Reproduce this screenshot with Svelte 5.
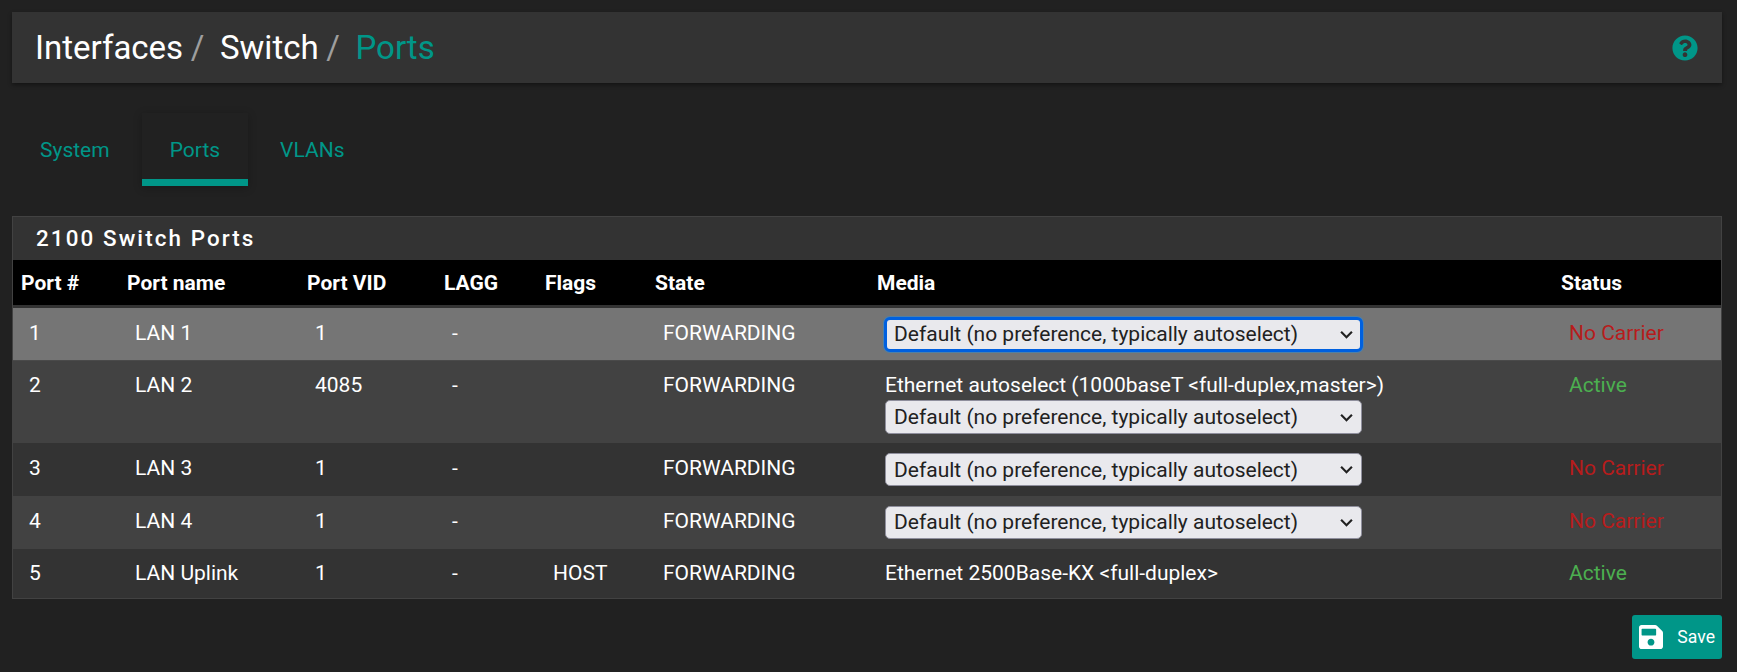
<script>
  const ports = [
    { id: 1, name: "LAN 1", vid: "1", flags: "", info: "", select: true, status: "No Carrier", focus: true },
    { id: 2, name: "LAN 2", vid: "4085", flags: "", info: "Ethernet autoselect (1000baseT <full-duplex,master>)", select: true, status: "Active" },
    { id: 3, name: "LAN 3", vid: "1", flags: "", info: "", select: true, status: "No Carrier" },
    { id: 4, name: "LAN 4", vid: "1", flags: "", info: "", select: true, status: "No Carrier" },
    { id: 5, name: "LAN Uplink", vid: "1", flags: "HOST", info: "Ethernet 2500Base-KX <full-duplex>", select: false, status: "Active" },
  ];
</script>

<div class="page">
  <header class="bar">
    <h1>
      <span>Interfaces</span><i>/</i>
      <span>Switch</span><i>/</i>
      <span class="current">Ports</span>
    </h1>
    <svg class="help" viewBox="0 0 512 512" width="26" height="26" aria-hidden="true">
      <path fill="currentColor" d="M504 256c0 137-111 248-248 248S8 393 8 256 119 8 256 8s248 111 248 248zM263 90c-54 0-89 23-116 64-4 5-3 12 3 16l35 26c5 4 13 3 17-2 18-23 30-36 58-36 21 0 46 13 46 33 0 15-12 23-33 34-23 14-55 31-55 73v7c0 7 5 12 12 12h56c7 0 12-5 12-12v-3c0-29 84-30 84-108 0-59-61-104-119-104zm-7 251c-25 0-46 21-46 46s21 46 46 46 46-21 46-46-21-46-46-46z" />
    </svg>
  </header>

  <nav class="tabs">
    <a href="#system">System</a>
    <a href="#ports" class="active">Ports</a>
    <a href="#vlans">VLANs</a>
  </nav>

  <section class="panel">
    <h2>2100 Switch Ports</h2>
    <table>
      <colgroup>
        <col style="width:106px" />
        <col style="width:180px" />
        <col style="width:137px" />
        <col style="width:101px" />
        <col style="width:110px" />
        <col style="width:222px" />
        <col style="width:684px" />
        <col />
      </colgroup>
      <thead>
        <tr>
          <th>Port #</th>
          <th>Port name</th>
          <th>Port VID</th>
          <th>LAGG</th>
          <th>Flags</th>
          <th>State</th>
          <th>Media</th>
          <th>Status</th>
        </tr>
      </thead>
      <tbody>
        {#each ports as p}
          <tr class:hover={p.focus}>
            <td>{p.id}</td>
            <td>{p.name}</td>
            <td>{p.vid}</td>
            <td>-</td>
            <td>{p.flags}</td>
            <td>FORWARDING</td>
            <td>
              {#if p.info}<div class="info">{p.info}</div>{/if}
              {#if p.select}
                <select class:focus={p.focus}>
                  <option>Default (no preference, typically autoselect)</option>
                </select>
              {/if}
            </td>
            <td class={p.status === "Active" ? "up" : "down"}>{p.status}</td>
          </tr>
        {/each}
      </tbody>
    </table>
  </section>

  <div class="actions">
    <button>
      <svg viewBox="0 0 448 448" width="24" height="24" aria-hidden="true">
        <path fill="currentColor" d="M433 113 335 15C325 5 313 0 301 0H48C21 0 0 21 0 48v352c0 27 21 48 48 48h352c27 0 48-21 48-48V147c0-12-5-24-15-34zM224 384c-35 0-64-29-64-64s29-64 64-64 64 29 64 64-29 64-64 64zm96-300v100c0 7-5 12-12 12H60c-7 0-12-5-12-12V80c0-7 5-12 12-12h244c9 0 16 7 16 16z" />
      </svg>
      Save
    </button>
  </div>
</div>

<style>
  :global(body) {
    background: #212121;
    font-family: Roboto, "Liberation Sans", sans-serif;
  }
  .page {
    padding: 12px 15px 0 12px;
    color: #fff;
    font-size: 21px;
  }
  .bar {
    height: 71px;
    background: #333;
    box-shadow: 0 2px 4px rgba(0, 0, 0, 0.4);
    display: flex;
    align-items: center;
    justify-content: space-between;
    padding: 0 24px 0 23px;
  }
  h1 {
    margin: 0;
    font-size: 33px;
    font-weight: 400;
  }
  h1 i {
    font-style: normal;
    color: #9e9e9e;
    margin: 0 7.5px;
  }
  .current {
    color: #009688;
  }
  .help {
    color: #009688;
    display: block;
  }
  .tabs {
    display: flex;
    margin: 30px 0;
  }
  .tabs a {
    color: #009688;
    text-decoration: none;
    box-sizing: border-box;
    height: 73px;
    padding: 8px 28px 0;
    margin-right: 4px;
    line-height: 58px;
    border-bottom: 7px solid transparent;
  }
  .tabs a.active {
    border-bottom-color: #009688;
    box-shadow: 0 2px 8px rgba(0, 0, 0, 0.25);
  }
  .panel {
    background: #333;
    border: 1px solid #424242;
  }
  h2 {
    margin: 0;
    height: 43px;
    line-height: 43px;
    padding-left: 23px;
    font-size: 22.4px;
    font-weight: 500;
    letter-spacing: 2.1px;
  }
  table {
    width: 100%;
    border-collapse: collapse;
    table-layout: fixed;
  }
  th {
    background: #000;
    height: 45px;
    padding: 0 8px;
    text-align: left;
    font-weight: 700;
    border-bottom: 3px solid #333;
  }
  td {
    padding: 9.6px 16px;
    vertical-align: top;
    line-height: 30px;
    color: #fff;
  }
  tbody tr:nth-child(even) {
    background: #424242;
  }
  tbody tr.hover {
    background: #757575;
  }
  tbody tr.hover td {
    box-shadow: inset 0 -1px #4a4a4a;
  }
  .info {
    height: 30px;
  }
  select {
    display: block;
    box-sizing: border-box;
    width: 477px;
    height: 33.5px;
    font: inherit;
    line-height: 30px;
    padding: 0 30px 0 8px;
    color: #212121;
    background-color: #e9e9ed;
    background-image: url("data:image/svg+xml,%3Csvg xmlns='http://www.w3.org/2000/svg' viewBox='0 0 12 8'%3E%3Cpath d='M1 1.5l5 5 5-5' fill='none' stroke='%23222' stroke-width='2'/%3E%3C/svg%3E");
    background-repeat: no-repeat;
    background-position: right 8px center;
    background-size: 13px 9px;
    border: 1px solid #8f8f9d;
    border-radius: 5px;
    appearance: none;
  }
  select.focus {
    border-color: #0060df;
    outline: 3px solid #0060df;
    outline-offset: -2px;
    box-shadow: 0 0 0 2px rgba(40, 140, 220, 0.5);
  }
  .up {
    color: #4caf50;
  }
  .down {
    color: #b71c1c;
  }
  .actions {
    display: flex;
    justify-content: flex-end;
    margin-top: 16px;
  }
  button {
    display: flex;
    align-items: center;
    gap: 14px;
    height: 44px;
    padding: 0 7px;
    border: 0;
    border-radius: 3px;
    background: #009688;
    color: #fff;
    font: inherit;
    font-size: 17.6px;
  }
</style>
